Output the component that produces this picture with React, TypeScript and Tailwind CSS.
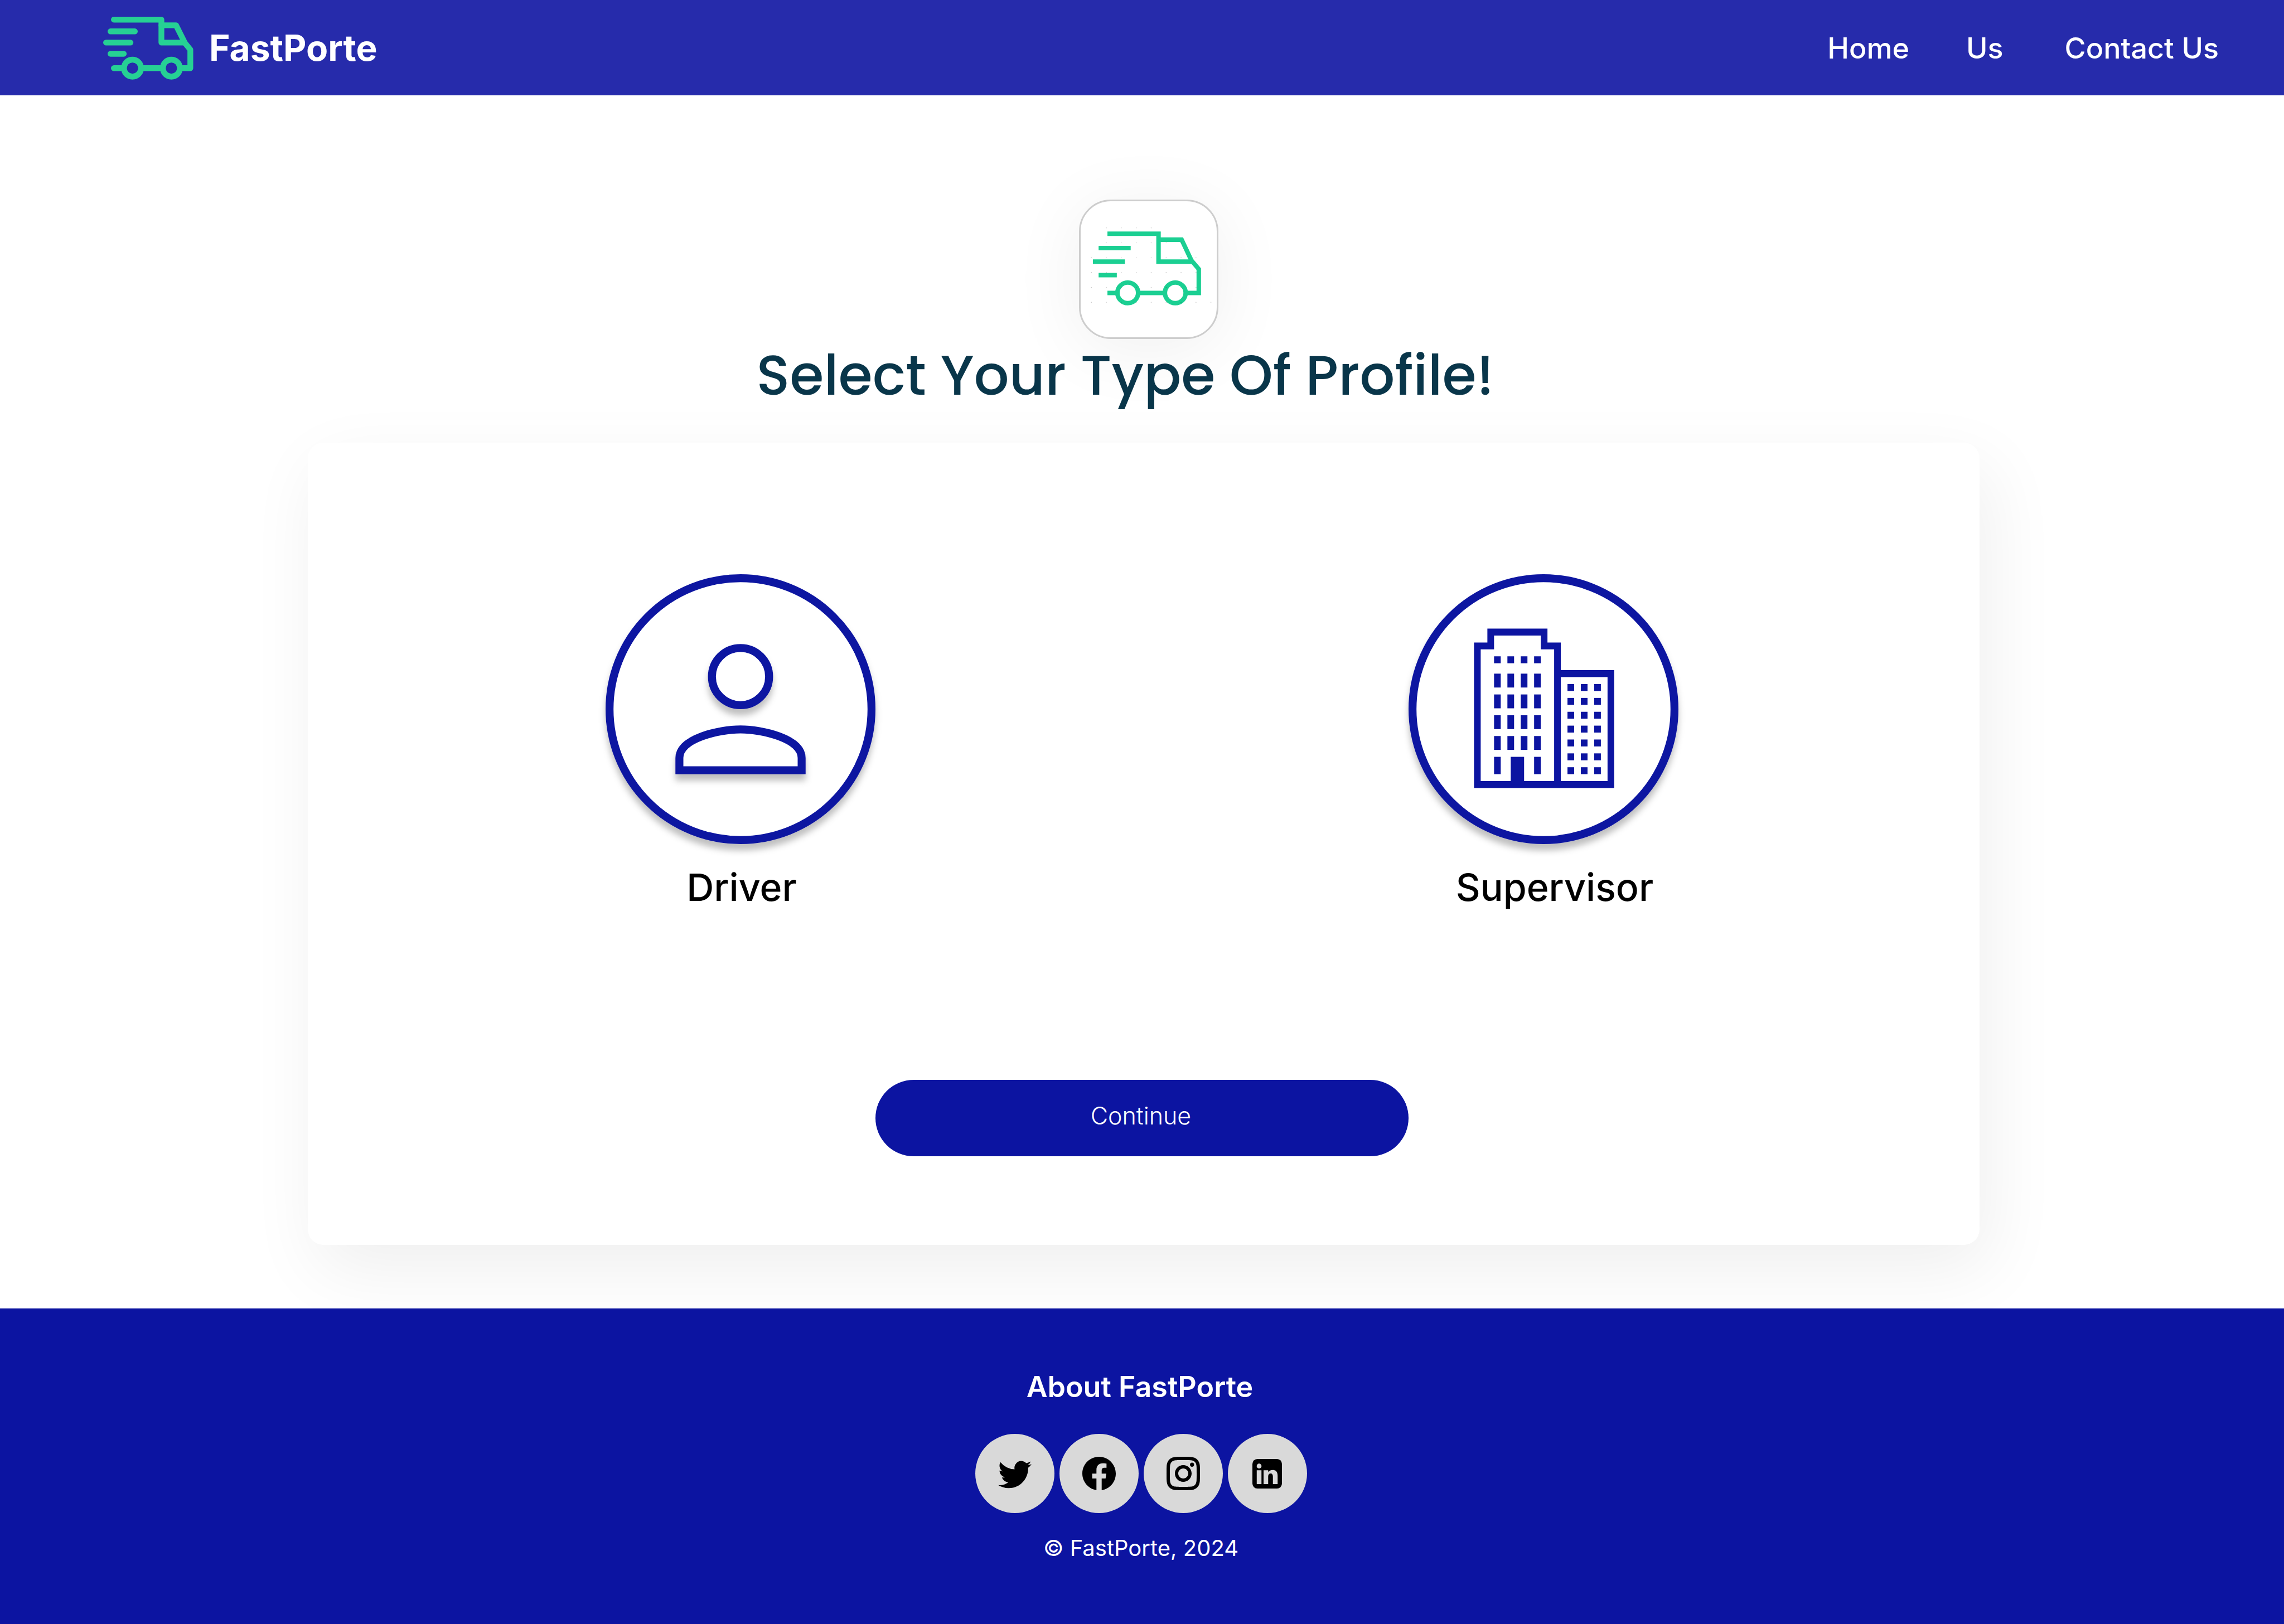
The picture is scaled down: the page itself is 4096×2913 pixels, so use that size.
import { BsFacebook, BsTwitter } from "react-icons/bs";
import { RiInstagramLine } from "react-icons/ri";

function NavTruck() {
  return (
    <svg viewBox="0 0 228 159" className="h-[113px] w-[162px]" fill="none" stroke="#26d094" strokeWidth="14.600" strokeLinecap="round" strokeLinejoin="round" aria-hidden="true">
      <path d="M27 7.300H147V65.200H205" />
      <path d="M147 21.600H184L206.500 66.500L220 83V129.800H27" />
      <path d="M18.500 37H80M7.300 65.200H69M18.500 93.500H52" />
      <circle cx="74" cy="129.800" r="21.500" fill="#262bab" />
      <circle cx="172.200" cy="129.800" r="21.500" fill="#262bab" />
    </svg>
  );
}

const dotRows = [
  { y: 406, from: 1, to: 4 },
  { y: 519, from: 1, to: 6 },
  { y: 632, from: 0, to: 7 },
  { y: 744, from: 0, to: 7 },
  { y: 857, from: 0, to: 7 },
  { y: 970, from: 0, to: 8 },
];

function CardTruck() {
  return (
    <svg viewBox="253 204 1031 1031" className="size-full" fill="none" stroke="#1bcf92" strokeWidth="34" aria-hidden="true">
      <path d="M456 450H843V662H1095" />
      <path d="M843 495H1018L1092 652L1148 718V899H456" />
      <path d="M389 559H632M346 662H588M389 764H527" />
      <circle cx="610" cy="898" r="78.500" fill="#fff" />
      <circle cx="970" cy="898" r="78.500" fill="#fff" />
      <g fill="#000" fillOpacity="0.28" stroke="none">
        {dotRows.map((row) =>
          Array.from({ length: row.to - row.from + 1 }, (_, i) => (
            <circle key={`${row.y}-${i}`} cx={334 + (row.from + i) * 113.3} cy={row.y} r="3" />
          )),
        )}
      </g>
    </svg>
  );
}

function DriverIcon() {
  return (
    <svg viewBox="0 0 680 680" className="size-[484px] overflow-visible" fill="#fff" stroke="#0c14a1" strokeWidth="20" aria-hidden="true">
      <defs>
        <filter id="driver-shadow" x="-10%" y="-10%" width="120%" height="125%">
          <feDropShadow dx="0" dy="16" stdDeviation="8" floodColor="#000" floodOpacity="0.25" />
        </filter>
      </defs>
      <circle cx="340" cy="340" r="330" filter="url(#driver-shadow)" />
      <g filter="url(#driver-shadow)">
        <circle cx="340" cy="258" r="72" />
        <path d="M186 494V463C186 414 285 391 340 391S494 414 494 463V494Z" />
      </g>
    </svg>
  );
}

const towerColumns = [3, 5, 7, 9];
const towerRows = [6.5, 9.5, 12.5, 15.5];
const annexColumns = [14, 16, 18];
const annexRows = [8, 10, 12, 14, 16, 18, 20];

function SupervisorIcon() {
  return (
    <svg viewBox="0 0 680 680" className="size-[484px] overflow-visible" aria-hidden="true">
      <defs>
        <filter id="supervisor-shadow" x="-10%" y="-10%" width="120%" height="125%">
          <feDropShadow dx="0" dy="16" stdDeviation="8" floodColor="#000" floodOpacity="0.25" />
        </filter>
      </defs>
      <circle cx="340" cy="340" r="330" fill="#fff" stroke="#0c14a1" strokeWidth="20" filter="url(#supervisor-shadow)" />
      <g transform="translate(165 137) scale(16.82 17.47)" fill="#0c14a1">
        <path fillRule="evenodd" d="M0 23V2H2V0H11V2H13V6H21V23ZM1 3V22H12V3H10V1H3V3ZM13 7V22H20V7Z" />
        {towerColumns.map((x) => (
          <rect key={x} x={x} y="4" width="1" height="1" />
        ))}
        {towerRows.map((y) => towerColumns.map((x) => <rect key={`${x}-${y}`} x={x} y={y} width="1" height="2" />))}
        <rect x="3" y="18.500" width="1" height="2.500" />
        <rect x="9" y="18.500" width="1" height="2.500" />
        <rect x="5.500" y="18.500" width="2" height="4" />
        {annexRows.map((y) => annexColumns.map((x) => <rect key={`${x}-${y}`} x={x} y={y} width="1" height="1" />))}
      </g>
    </svg>
  );
}

function LinkedInIcon() {
  return (
    <svg viewBox="828 198 225 225" className="size-[53px]" aria-hidden="true">
      <rect x="828" y="198" width="225" height="225" rx="38" fill="#000" />
      <g fill="#d9d9d9">
        <circle cx="879" cy="252" r="18.500" />
        <rect x="861" y="284" width="36" height="105" />
        <path d="M913 284H948V298C955 287 968 282 983 282C1010 282 1020 300 1020 326V389H984V332C984 316 978 308 967 308C956 308 948 316 948 330V389H913Z" />
      </g>
    </svg>
  );
}

const socialLinks = [
  { name: "Twitter", icon: <BsTwitter className="size-[60px]" /> },
  { name: "Facebook", icon: <BsFacebook className="size-[60px]" /> },
  { name: "Instagram", icon: <RiInstagramLine className="size-[72px]" /> },
  { name: "LinkedIn", icon: <LinkedInIcon /> },
];

export default function App() {
  return (
    <div className="flex min-h-screen flex-col bg-white font-['Inter',sans-serif]">
      <header className="flex h-[171px] items-center justify-between bg-[#262bab] pt-0.5 pr-[117px] pl-[185px] text-white">
        <a href="#" className="flex items-center gap-7">
          <NavTruck />
          <span className="pb-0.5 text-[64px] leading-[76px] font-bold">FastPorte</span>
        </a>
        <nav className="flex gap-[102px] text-[52px] leading-[64px] font-medium">
          <a href="#home">Home</a>
          <a href="#us">Us</a>
          <a href="#contact" className="pl-2">Contact Us</a>
        </nav>
      </header>

      <main className="flex flex-col pt-[187px] pb-[114px]">
        <div className="flex justify-center pl-6">
          <div className="size-[250px] rounded-[57px] border-3 border-[#cdcdcd] bg-white shadow-[0_17px_130px_rgba(0,0,0,0.063)]">
            <CardTruck />
          </div>
        </div>
        <h1 className="relative mt-2.5 pr-[60px] text-center font-['Poppins','Inter',sans-serif] text-[99px] leading-[112px] font-medium text-[#09364a]">
          Select Your Type Of Profile!
        </h1>
        <section className="mt-16 mr-[546px] ml-[552px] flex flex-col items-center rounded-[28px] bg-white pt-[236px] pr-[6px] pb-[159px] shadow-[17px_43px_130px_rgba(0,0,0,0.067)]">
          <div className="flex gap-[956px] text-[68px] leading-[84px] font-medium text-black">
            <button type="button" className="flex w-[484px] flex-col items-center gap-[35px]">
              <DriverIcon />
              <span className="pl-1">Driver</span>
            </button>
            <button type="button" className="flex w-[484px] flex-col items-center gap-[35px]">
              <SupervisorIcon />
              <span className="pl-10">Supervisor</span>
            </button>
          </div>
          <button type="button" className="mt-[304px] h-[137px] w-[956px] rounded-full bg-[#0c14a1] pr-1 pb-2.5 text-[43px] leading-[52px] font-light text-white">
            Continue
          </button>
        </section>
      </main>

      <footer className="relative flex grow flex-col items-center bg-[#0c14a1] pt-[109px] pr-1 text-white">
        <h2 className="pr-1 text-[52px] leading-[64px] font-semibold">About FastPorte</h2>
        <ul className="mt-[52px] flex gap-[9px]">
          {socialLinks.map((link) => (
            <li key={link.name}>
              <a href={`#${link.name.toLowerCase()}`} aria-label={link.name} className="flex size-[142px] items-center justify-center rounded-full bg-[#d9d9d9] text-black">
                {link.icon}
              </a>
            </li>
          ))}
        </ul>
        <p className="mt-[39px] text-[40px] leading-[48px]">© FastPorte, 2024</p>
      </footer>
    </div>
  );
}
